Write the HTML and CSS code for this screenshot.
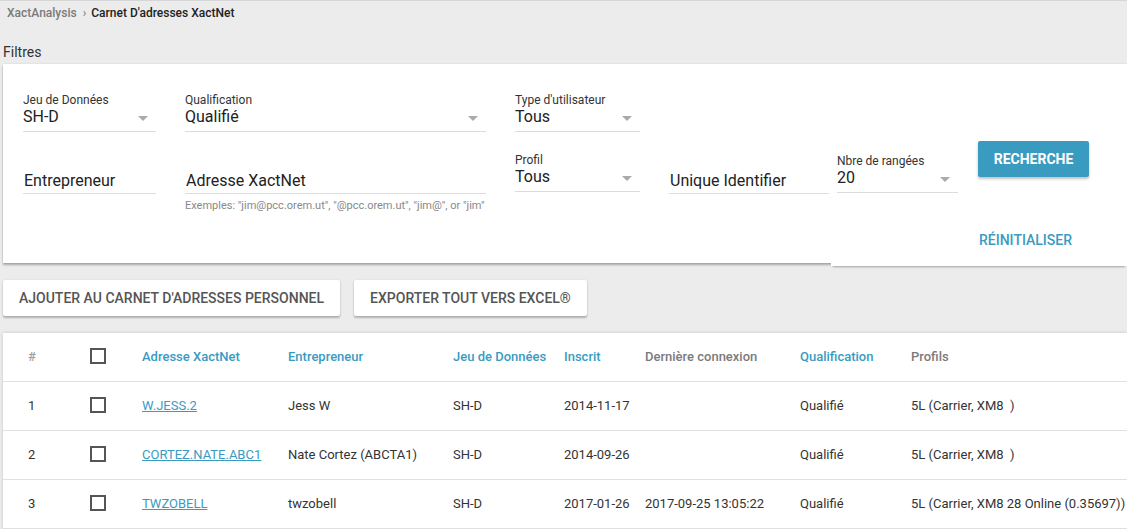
FILE: index.html
```html
<html>
    <head>
        <title>Carnet D'adresses XactNet</title>
        <link rel="stylesheet" href="styles.css">
    </head>
    <body>
        <div class="crumbs">
            <span class="crumb-root">XactAnalysis</span>
            <span class="crumb-sep">›</span>
            <span class="crumb-current">Carnet D'adresses XactNet</span>
        </div>

        <div class="page">
            <div class="section-title">Filtres</div>

            <div class="filtres">
                <div class="row row1">
                    <div class="champ select w-jeu">
                        <label>Jeu de Données</label>
                        <div class="valeur">SH-D<span class="fleche"></span></div>
                    </div>
                    <div class="champ select w-qual">
                        <label>Qualification</label>
                        <div class="valeur">Qualifié<span class="fleche"></span></div>
                    </div>
                    <div class="champ select w-type">
                        <label>Type d'utilisateur</label>
                        <div class="valeur">Tous<span class="fleche"></span></div>
                    </div>
                </div>

                <div class="row row2">
                    <div class="champ texte w-jeu">
                        <div class="saisie">Entrepreneur</div>
                    </div>
                    <div class="champ texte w-qual">
                        <div class="saisie">Adresse XactNet</div>
                        <div class="aide">Exemples: "jim@pcc.orem.ut", "@pcc.orem.ut", "jim@", or "jim"</div>
                    </div>
                    <div class="champ select w-type">
                        <label>Profil</label>
                        <div class="valeur">Tous<span class="fleche"></span></div>
                    </div>
                    <div class="champ texte w-uid">
                        <div class="saisie">Unique Identifier</div>
                    </div>
                    <div class="champ select w-nbre">
                        <label>Nbre de rangées</label>
                        <div class="valeur">20<span class="fleche"></span></div>
                    </div>
                    <button class="btn-recherche">Recherche</button>
                </div>

                <div class="pied">
                    <div class="reset-zone">
                        <span class="reset">Réinitialiser</span>
                    </div>
                </div>
            </div>

            <div class="actions">
                <button class="btn">Ajouter au carnet d'adresses personnel</button>
                <button class="btn">Exporter tout vers Excel®</button>
            </div>

            <div class="liste">
                <table>
                    <colgroup>
                        <col style="width: 87px">
                        <col style="width: 52px">
                        <col style="width: 146px">
                        <col style="width: 165px">
                        <col style="width: 111px">
                        <col style="width: 81px">
                        <col style="width: 155px">
                        <col style="width: 111px">
                        <col>
                    </colgroup>
                    <thead>
                        <tr>
                            <th class="num">#</th>
                            <th><span class="case"></span></th>
                            <th class="tri">Adresse XactNet</th>
                            <th class="tri">Entrepreneur</th>
                            <th class="tri">Jeu de Données</th>
                            <th class="tri">Inscrit</th>
                            <th>Dernière connexion</th>
                            <th class="tri">Qualification</th>
                            <th>Profils</th>
                        </tr>
                    </thead>
                    <tbody>
                        <tr>
                            <td class="num">1</td>
                            <td><span class="case"></span></td>
                            <td><a href="#">W.JESS.2</a></td>
                            <td>Jess W</td>
                            <td>SH-D</td>
                            <td>2014-11-17</td>
                            <td></td>
                            <td>Qualifié</td>
                            <td>5L (Carrier, XM8&nbsp; )</td>
                        </tr>
                        <tr>
                            <td class="num">2</td>
                            <td><span class="case"></span></td>
                            <td><a href="#">CORTEZ.NATE.ABC1</a></td>
                            <td>Nate Cortez (ABCTA1)</td>
                            <td>SH-D</td>
                            <td>2014-09-26</td>
                            <td></td>
                            <td>Qualifié</td>
                            <td>5L (Carrier, XM8&nbsp; )</td>
                        </tr>
                        <tr>
                            <td class="num">3</td>
                            <td><span class="case"></span></td>
                            <td><a href="#">TWZOBELL</a></td>
                            <td>twzobell</td>
                            <td>SH-D</td>
                            <td>2017-01-26</td>
                            <td>2017-09-25 13:05:22</td>
                            <td>Qualifié</td>
                            <td>5L (Carrier, XM8 28 Online (0.35697))</td>
                        </tr>
                    </tbody>
                </table>
            </div>
        </div>
    </body>
</html>
```

FILE: styles.css
```css
*{
    margin: 0;
    padding: 0;
    box-sizing: border-box;
}
body{
    margin: 0;
    background: #ececec;
    font-family: Roboto, "Liberation Sans", sans-serif;
    color: #212121;
    border-top: 1px solid #d6d6d6;
    overflow: hidden;
}

/* fil d'ariane */
.crumbs{
    height: 24px;
    line-height: 24px;
    padding-left: 7px;
    font-size: 12px;
    font-weight: 500;
}
.crumb-root{
    color: #7a7a7a;
}
.crumb-sep{
    color: #888;
    margin: 0 2px 0 3px;
}
.crumb-current{
    color: #222;
}

.page{
    padding-left: 3px;
}
.section-title{
    margin-top: 17px;
    height: 22px;
    line-height: 20px;
    font-size: 14px;
    color: #333;
}

/* carte des filtres */
.filtres{
    background: #fff;
    box-shadow: 0 2px 2px rgba(0,0,0,0.28), 0 0 2px rgba(0,0,0,0.1);
    padding: 29px 0 0 20px;
    position: relative;
}
.row{
    display: flex;
    align-items: flex-start;
}
.row2{
    margin-top: 21px;
    height: 61px;
}
.champ{
    margin-right: 29px;
    position: relative;
}
.w-jeu{ width: 133px; }
.w-qual{ width: 301px; }
.w-type{ width: 125px; }
.w-uid{ width: 160px; margin-right: 8px; }
.w-nbre{ width: 121px; margin-right: 20px; margin-top: 1px; }

.champ label{
    display: block;
    height: 14px;
    line-height: 14px;
    font-size: 12px;
    color: #333;
}
.valeur{
    height: 25px;
    line-height: 20px;
    font-size: 16px;
    color: #212121;
    border-bottom: 1px solid #dcdcdc;
    position: relative;
}
.fleche{
    position: absolute;
    right: 8px;
    top: 9px;
    width: 0;
    height: 0;
    border-left: 5px solid transparent;
    border-right: 5px solid transparent;
    border-top: 5px solid #aaa;
}
.texte{
    padding-top: 14px;
}
.saisie{
    height: 27px;
    line-height: 28px;
    padding-left: 1px;
    font-size: 16px;
    color: #222;
    border-bottom: 1px solid #dcdcdc;
}
.aide{
    margin-top: 5px;
    font-size: 11px;
    line-height: 13px;
    color: #888;
    white-space: nowrap;
}

.btn-recherche{
    margin-top: -12px;
    width: 111px;
    height: 36px;
    background: #3a9bc1;
    color: #fff;
    border: none;
    border-radius: 2px;
    box-shadow: 0 2px 3px rgba(0,0,0,0.25);
    font-family: Roboto, "Liberation Sans", sans-serif;
    font-size: 14px;
    font-weight: 700;
    text-transform: uppercase;
}

.pied{
    display: flex;
    justify-content: flex-end;
}
.reset-zone{
    width: 296px;
    margin-bottom: -3px;
    padding: 16px 0 16px 148px;
    background: #fff;
    box-shadow: 0 3px 2px -2px rgba(0,0,0,0.3);
    position: relative;
}
.reset{
    display: block;
    line-height: 20px;
    font-size: 14px;
    font-weight: 500;
    color: #3a9bc1;
    text-transform: uppercase;
}

/* boutons */
.actions{
    display: flex;
    gap: 14px;
    margin-top: 17px;
}
.btn{
    height: 36px;
    padding: 0 16px;
    background: #fff;
    border: none;
    border-radius: 2px;
    box-shadow: 0 2px 2px rgba(0,0,0,0.24), 0 0 2px rgba(0,0,0,0.1);
    font-family: Roboto, "Liberation Sans", sans-serif;
    font-size: 14px;
    font-weight: 500;
    color: #555;
    text-transform: uppercase;
}

/* tableau */
.liste{
    margin-top: 17px;
    background: #fff;
    box-shadow: 0 0 3px rgba(0,0,0,0.18);
}
table{
    width: 100%;
    border-collapse: collapse;
    table-layout: fixed;
}
th, td{
    height: 49px;
    text-align: left;
    vertical-align: middle;
    white-space: nowrap;
    border-bottom: 1px solid #e0e0e0;
    font-size: 13px;
}
th{
    height: 48px;
    font-weight: 500;
    color: #7b7b7b;
}
th.tri{
    color: #3a9bc1;
}
th.num{
    color: #9e9e9e;
}
td{
    color: #333;
}
.num{
    padding-left: 25px;
}
.case{
    display: inline-block;
    width: 16px;
    height: 16px;
    border: 2px solid #555;
    vertical-align: middle;
    margin-top: -2px;
}
td a{
    color: #3a9bc1;
    text-decoration: underline;
}
```
